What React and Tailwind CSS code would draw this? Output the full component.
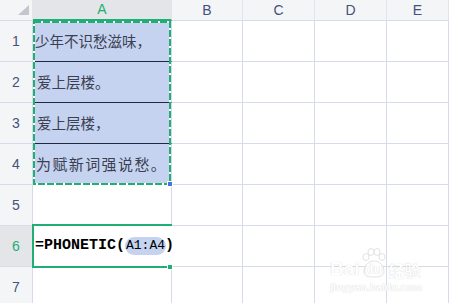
import React from 'react';

const GRID = 'border-[#d5dbe8]';
const cols = [
  { key: 'A', w: 'w-[139px]' },
  { key: 'B', w: 'w-[71px]' },
  { key: 'C', w: 'w-[72px]' },
  { key: 'D', w: 'w-[72px]' },
  { key: 'E', w: 'flex-1' },
];

const cellText = {
  1: { text: '少年不识愁滋味，', cls: 'pl-[2px] text-[14.5px]' },
  2: { text: '爱上层楼。', cls: 'pl-[4px] text-[14.5px]' },
  3: { text: '爱上层楼，', cls: 'pl-[4px] text-[14.5px]' },
  4: { text: '为赋新词强说愁。', cls: 'pl-[3px] text-[15px] tracking-[1.4px]' },
};

const HeaderRow = () => (
  <div className="flex h-[21px] bg-[#f4f5f7]">
    <div className={`relative w-[33px] border-r border-b ${GRID} border-r-[#e0e4ec]`}>
      <svg className="absolute left-[18px] top-[5px]" width="11" height="10" viewBox="0 0 11 10">
        <polygon points="0,10 11,10 11,0" fill="#c2c6ce" />
      </svg>
    </div>
    {cols.map((c) =>
      c.key === 'A' ? (
        <div
          key={c.key}
          className={`${c.w} flex items-center justify-center border-r border-r-[#e0e4ec] border-b-2 border-b-[#1fae74] bg-[#e3e5e9] text-[14px] text-[#1fae74]`}
        >
          A
        </div>
      ) : (
        <div
          key={c.key}
          className={`${c.w} flex items-center justify-center border-r border-r-[#e0e4ec] border-b ${GRID} text-[14px] text-[#44527a]`}
        >
          {c.key}
        </div>
      )
    )}
  </div>
);

const Row = ({ n }) => {
  const active = n === 6;
  const sel = n >= 1 && n <= 4;
  return (
    <div className="flex h-[41px]">
      <div
        className={`w-[33px] flex items-center justify-center border-r border-b ${GRID} text-[14px] ${
          active ? 'bg-[#e3e5e9] text-[#1fae74]' : 'bg-[#f4f5f7] text-[#44527a]'
        }`}
      >
        {n}
      </div>
      {cols.map((c) => {
        if (c.key === 'A' && sel) {
          const t = cellText[n];
          return (
            <div
              key={c.key}
              className={`${c.w} flex items-center border-r border-b ${GRID} ${
                n < 4 ? 'border-b-[#1f2942]' : ''
              } bg-[#c5d3f1] text-[#3a4050] ${t.cls}`}
              style={{ fontFamily: '"Noto Sans CJK SC", sans-serif' }}
            >
              {t.text}
            </div>
          );
        }
        return <div key={c.key} className={`${c.w} border-r border-b ${GRID}`} />;
      })}
    </div>
  );
};

const Watermark = () => (
  <div className="absolute left-[330px] top-[248px] flex flex-col text-white [text-shadow:0_0_1px_rgba(0,0,0,0.22)]">
    <div className="flex items-end h-[30px]">
      <span className="text-[19px] font-bold leading-none" style={{ fontFamily: '"Liberation Sans", sans-serif' }}>
        Bai
      </span>
      <span className="relative w-[28px] h-[30px] flex items-end justify-center">
        <svg className="absolute left-0 top-0" width="28" height="30" viewBox="0 0 28 30">
          <g fill="white" stroke="#dadada" strokeWidth="0.8">
            <ellipse cx="6" cy="9" rx="3" ry="3.5" />
            <ellipse cx="11" cy="4" rx="3" ry="3.5" />
            <ellipse cx="17" cy="4" rx="3" ry="3.5" />
            <ellipse cx="22" cy="9" rx="3" ry="3.5" />
            <path d="M4 24 C4 16 10 13 14 13 C18 13 24 16 24 24 C24 28 20 29 14 29 C8 29 4 28 4 24 Z" />
          </g>
        </svg>
        <span className="relative text-[15px] font-bold leading-none mb-[2px] text-white" style={{ fontFamily: '"Liberation Sans", sans-serif' }}>
          du
        </span>
      </span>
      <span className="text-[16px] font-bold leading-none ml-[1px]" style={{ fontFamily: '"Noto Sans CJK SC", sans-serif' }}>
        经验
      </span>
    </div>
    <div className="text-[10.5px] font-bold leading-none mt-[4px]" style={{ fontFamily: '"Liberation Sans", sans-serif' }}>
      jingyan.baidu.com
    </div>
  </div>
);

export default function App() {
  return (
    <div className="relative w-[449px] h-[303px] overflow-hidden bg-white" style={{ fontFamily: '"Liberation Sans", "Noto Sans", sans-serif' }}>
      <HeaderRow />
      {[1, 2, 3, 4, 5, 6, 7].map((n) => (
        <Row key={n} n={n} />
      ))}

      {/* marching ants round A1:A4 */}
      <svg className="absolute left-[33px] top-[21px]" width="139" height="164" viewBox="0 0 139 164">
        <rect x="1" y="1" width="136" height="162" fill="none" stroke="#ffffff" strokeWidth="2" />
        <rect x="1" y="1" width="136" height="162" fill="none" stroke="#1fae74" strokeWidth="2" strokeDasharray="7 2" />
      </svg>
      <div className="absolute left-[167px] top-[181px] w-[6px] h-[6px] bg-[#4a72d8] border border-white" />

      {/* cell editor in A6 */}
      <div className="absolute left-[32px] top-[224px] w-[140px] h-[44px] bg-white border-t-2 border-l-2 border-b-2 border-[#1fae74]">
        <div className="flex items-center h-full pl-[1px] text-black" style={{ fontFamily: '"Liberation Mono", monospace' }}>
          <span className="text-[15px] font-bold">=PHONETIC(</span>
          <span className="text-[13px] bg-[#c5d3f1] rounded-full px-[1px] leading-[18px]">A1:A4</span>
          <span className="w-px h-[17px] bg-black" />
          <span className="text-[15px] font-bold -ml-[1px]">)</span>
        </div>
      </div>
      <div className="absolute left-[167px] top-[264px] w-[6px] h-[6px] bg-[#1fae74] border border-white" />

      <Watermark />
    </div>
  );
}
